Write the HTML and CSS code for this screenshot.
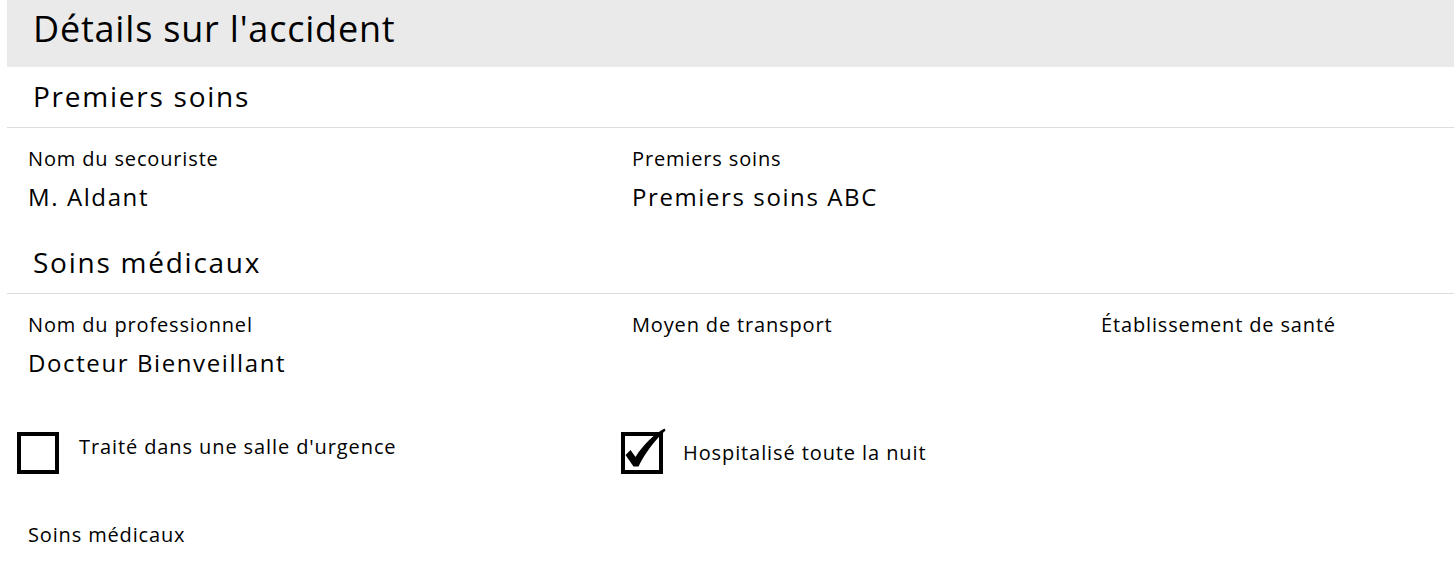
FILE: index.html
```html
<!DOCTYPE html>
<html lang="fr">
<head>
<meta charset="utf-8">
<title>Détails sur l'accident</title>
<link rel="stylesheet" href="styles.css">
</head>
<body>
<main class="page">
  <header class="page-header">
    <h1 class="page-title">Détails sur l'accident</h1>
  </header>

  <section class="group">
    <h2 class="group-title">Premiers soins</h2>
    <div class="fields">
      <div class="field">
        <div class="field-label">Nom du secouriste</div>
        <div class="field-value">M. Aldant</div>
      </div>
      <div class="field">
        <div class="field-label">Premiers soins</div>
        <div class="field-value">Premiers soins ABC</div>
      </div>
      <div class="field"></div>
    </div>
  </section>

  <section class="group">
    <h2 class="group-title">Soins médicaux</h2>
    <div class="fields">
      <div class="field">
        <div class="field-label">Nom du professionnel</div>
        <div class="field-value">Docteur Bienveillant</div>
      </div>
      <div class="field">
        <div class="field-label">Moyen de transport</div>
        <div class="field-value"></div>
      </div>
      <div class="field">
        <div class="field-label">Établissement de santé</div>
        <div class="field-value"></div>
      </div>
    </div>

    <div class="checks">
      <div class="check">
        <span class="check-box"></span>
        <span class="check-label">Traité dans une salle d'urgence</span>
      </div>
      <div class="check check--on">
        <span class="check-box">
          <svg class="check-mark" viewBox="0 0 42 42" width="42" height="42" aria-hidden="true">
            <path d="M4.5 23 L9.5 18 L14.5 25 C22 13 32 3 43.5 -3.5 L44.5 -1.5 C34 8 24 21 17.5 34.5 L12.5 34.5 Z" fill="#000"/>
          </svg>
        </span>
        <span class="check-label">Hospitalisé toute la nuit</span>
      </div>
    </div>

    <div class="fields fields--single">
      <div class="field">
        <div class="field-label">Soins médicaux</div>
      </div>
    </div>
  </section>
</main>
</body>
</html>
```

FILE: styles.css
```css
html, body {
  margin: 0;
  padding: 0;
  background: #fff;
}

body {
  padding-left: 7px;
  font-family: "Open Sans", "Noto Sans", "DejaVu Sans", sans-serif;
  color: #000;
}

.page {
  display: flex;
  flex-direction: column;
}

.page-header {
  background: #eaeaea;
  height: 67px;
  display: flex;
  align-items: flex-start;
  padding-left: 26px;
}

.page-title {
  margin: 0;
  font-weight: 400;
  font-size: 36px;
  line-height: 48px;
  letter-spacing: 0.8px;
  padding-top: 5px;
}

.group-title {
  margin: 0;
  font-weight: 400;
  font-size: 28px;
  line-height: 36px;
  letter-spacing: 1.75px;
  padding: 11px 0 13px 26px;
  border-bottom: 1px solid #dedede;
}

.fields {
  display: grid;
  grid-template-columns: 604px 469px 1fr;
  padding: 18px 0 0 21px;
}

.field {
  display: flex;
  flex-direction: column;
}

.field-label {
  font-size: 20px;
  line-height: 26px;
  letter-spacing: 0.85px;
}

.field-value {
  font-size: 24px;
  line-height: 30px;
  letter-spacing: 1.6px;
  min-height: 30px;
  padding-top: 10px;
  padding-bottom: 21px;
}

.checks {
  display: grid;
  grid-template-columns: 604px 1fr;
  padding: 33px 0 0 10px;
}

.check {
  display: flex;
  align-items: flex-start;
  gap: 20px;
}

.check-box {
  position: relative;
  width: 42px;
  height: 42px;
  box-sizing: border-box;
  border: 4px solid #000;
  flex: none;
}

.check-mark {
  position: absolute;
  left: -4px;
  top: -4px;
  overflow: visible;
}

.check-label {
  font-size: 20px;
  line-height: 26px;
  letter-spacing: 0.9px;
  padding-top: 1.5px;
}

.check--on .check-label {
  padding-top: 8px;
}

.fields--single {
  padding-top: 48px;
}
```
